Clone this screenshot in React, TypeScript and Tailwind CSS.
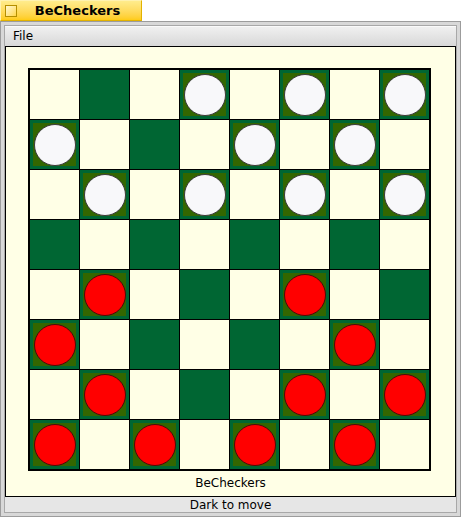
import React from "react";

type Cell = "" | "w" | "r";

// Board state, top row first. Only dark squares ((row + col) odd) hold pieces.
const rows: Cell[][] = [
  ["", "", "", "w", "", "w", "", "w"],
  ["w", "", "", "", "w", "", "w", ""],
  ["", "w", "", "w", "", "w", "", "w"],
  ["", "", "", "", "", "", "", ""],
  ["", "r", "", "", "", "r", "", ""],
  ["r", "", "", "", "", "", "r", ""],
  ["", "r", "", "", "", "r", "", "r"],
  ["r", "", "r", "", "r", "", "r", ""],
];

function Square({ dark, piece }: { dark: boolean; piece: Cell }) {
  if (!dark) return <div className="w-[49px] h-[49px] bg-[#ffffe6]" />;
  if (!piece) return <div className="w-[49px] h-[49px] bg-[#006633]" />;
  return (
    <div className="w-[49px] h-[49px] bg-[#006633] p-[3px]">
      <div className="w-full h-full bg-[#336600] flex items-center justify-center">
        <div
          className={
            piece === "w"
              ? "w-[42px] h-[42px] rounded-full bg-[#f8f8fa] border border-[#3a3a3a]"
              : "w-[42px] h-[42px] rounded-full bg-[#ff0000] border border-[#4a0a0a]"
          }
        />
      </div>
    </div>
  );
}

export default function App() {
  return (
    <div
      className="w-[461px] h-[517px] bg-white text-black relative"
      style={{ fontFamily: '"DejaVu Sans", "Liberation Sans", sans-serif' }}
    >
      {/* title tab */}
      <div className="h-[21px] w-[142px] flex items-center border border-[#e2b200] border-l-[#fff2b0] border-t-[#fff2b0] bg-gradient-to-b from-[#ffec8c] to-[#ffcc14]">
        <div className="ml-[4px] w-[12px] h-[12px] border border-[#b48e00] bg-gradient-to-br from-[#fff8d0] to-[#ffd640]" />
        <div className="flex-1 text-center text-[13px] font-bold leading-none pr-[3px]">BeCheckers</div>
      </div>

      {/* window frame */}
      <div className="h-[496px] w-[461px] border border-[#9c9c9c] bg-[#d8d8d8] p-[3px]">
        <div className="h-full w-full border border-[#a8a8a8] flex flex-col">
          {/* menu bar */}
          <div className="h-[20px] flex items-center bg-gradient-to-b from-[#f0f0f0] to-[#d8d8d8] border-t border-[#fafafa]">
            <span className="ml-[8px] text-[12px] leading-none pb-[2px]">File</span>
          </div>

          {/* board view */}
          <div className="w-[451px] h-[451px] border border-black bg-[#ffffe6] flex flex-col">
            <div className="pl-[22px] pt-[21px]">
              <div className="w-[403px] border-2 border-black bg-black grid grid-cols-8 gap-px">
                {rows.map((row, r) =>
                  row.map((p, c) => (
                    <Square key={`${r}-${c}`} dark={(r + c) % 2 === 1} piece={p} />
                  ))
                )}
              </div>
            </div>
            <div className="mt-[5px] text-center text-[12px] leading-[14px]">BeCheckers</div>
          </div>

          {/* status line */}
          <div className="flex-1 bg-[#e6e6e6] flex items-center justify-center text-[12px] leading-none">
            Dark to move
          </div>
        </div>
      </div>
    </div>
  );
}
